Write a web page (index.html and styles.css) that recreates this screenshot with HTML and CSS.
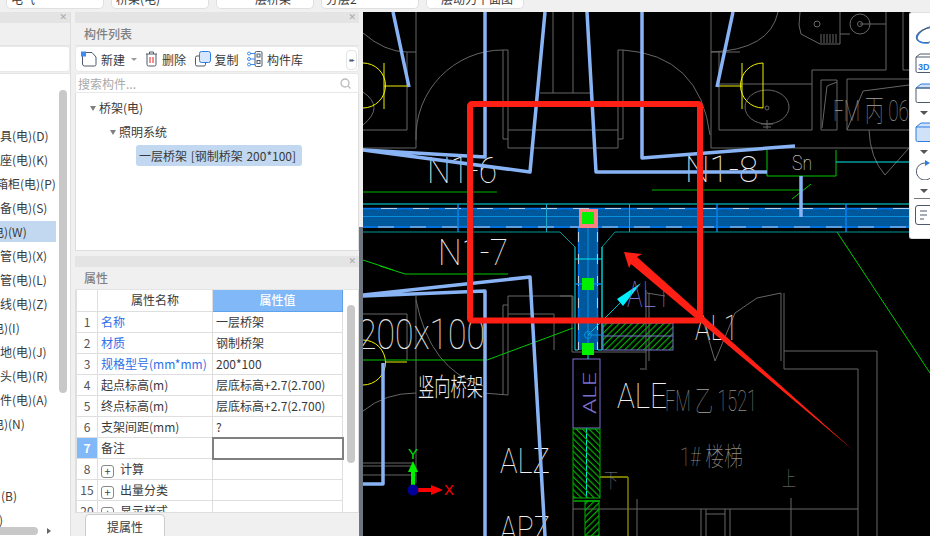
FILE: index.html
```html
<!DOCTYPE html>
<html lang="zh-CN">
<head>
<meta charset="utf-8">
<title>构件列表</title>
<link rel="stylesheet" href="styles.css">
</head>
<body>
<div class="app">
  <header class="topbar">
    <div class="pill pill-a"><span>电气</span></div>
    <div class="pill pill-a"><span>桥架(电)</span></div>
    <div class="pill pill-a pill-center"><span>一层桥架</span></div>
    <div class="pill pill-a"><span>分层2</span></div>
    <div class="pill pill-a pill-center"><span>层动力平面图</span></div>
  </header>
  <main class="main">
    <aside class="left">
      <div class="bar"><span class="close">✕</span></div>
      <div class="title"></div>
      <div class="left-tools"></div>
      <div class="left-list">
        <ul class="items">
          <li>具(电)(D)</li>
          <li>座(电)(K)</li>
          <li class="clip4">箱柜(电)(P)</li>
          <li>备(电)(S)</li>
          <li class="clip8 selected">电)(W)</li>
          <li>管(电)(X)</li>
          <li>管(电)(L)</li>
          <li>线(电)(Z)</li>
          <li class="clip8">电)(I)</li>
          <li>地(电)(J)</li>
          <li>头(电)(R)</li>
          <li>件(电)(A)</li>
          <li class="clip8">电)(N)</li>
          <li></li>
          <li></li>
          <li class="push">(B)</li>
          <li class="clip8b">)</li>
        </ul>
        <div class="vthumb"></div>
        <div class="hthumb"></div>
        <div class="harrow"></div>
      </div>
    </aside>

    <section class="mid">
      <div class="panel list-panel">
        <div class="bar"><span class="close">✕</span></div>
        <div class="title">构件列表</div>
        <div class="tools">
          <span class="tool tool-new">
            <svg class="ico" width="16" height="16" viewBox="0 0 16 16"><path class="ico-dark" d="M1.5 3.5V13a2 2 0 0 0 2 2h10a1.5 1.5 0 0 0 1.500-1.500V6L11 1.500H4"/><rect class="ico-fill" x="0" y="0.500" width="5" height="5"/></svg>
            新建<i class="caret"></i>
          </span>
          <span class="tool">
            <svg class="ico" width="13" height="16" viewBox="0 0 13 16"><path class="ico-dark" d="M1 3h11M4.500 3V1h4v2M2 3v10.500a1.500 1.500 0 0 0 1.500 1.500h6a1.500 1.500 0 0 0 1.500-1.500V3"/><path class="ico-red" d="M5 6v6M8 6v6"/></svg>
            删除
          </span>
          <span class="tool">
            <svg class="ico" width="16" height="16" viewBox="0 0 16 16"><path class="ico-dark" d="M4 5H2a1.500 1.500 0 0 0-1.500 1.500v7A1.500 1.500 0 0 0 2 15h7a1.500 1.500 0 0 0 1.500-1.500V12"/><rect class="ico-blue" x="4.500" y="0.500" width="11" height="11" rx="2"/></svg>
            复制
          </span>
          <span class="tool">
            <svg class="ico" width="16" height="16" viewBox="0 0 16 16"><rect class="ico-dark" x="8" y="0.500" width="7" height="15" rx="1.500"/><rect class="ico-dark" x="10" y="3" width="3" height="3"/><rect class="ico-dark" x="10" y="9.500" width="3" height="3"/><path class="ico-line" d="M3 2.500h5M3 8h5M3 13.500h5"/><circle class="ico-line" cx="2" cy="2.500" r="1.500"/><circle class="ico-line" cx="2" cy="8" r="1.500"/><circle class="ico-line" cx="2" cy="13.500" r="1.500"/></svg>
            构件库
          </span>
          <span class="more">▸▸</span>
        </div>
        <div class="search">
          <span>搜索构件...</span>
          <svg width="11" height="11" viewBox="0 0 11 11"><circle class="ico-search" cx="5" cy="5" r="4"/><path class="ico-search" d="M8 8l2.500 2.500"/></svg>
        </div>
        <div class="tree">
          <div class="node node-1"><i class="tri"></i>桥架(电)</div>
          <div class="node node-2"><i class="tri"></i>照明系统</div>
          <div class="node-3">一层桥架 [钢制桥架 200*100]</div>
        </div>
      </div>

      <div class="panel prop-panel">
        <div class="bar"><span class="close">✕</span></div>
        <div class="title">属性</div>
        <div class="prop-body">
          <table class="props">
            <colgroup><col class="c1"><col class="c2"><col class="c3"></colgroup>
            <tr><th></th><th>属性名称</th><th class="hot">属性值</th></tr>
            <tr><td class="n">1</td><td class="link">名称</td><td>一层桥架</td></tr>
            <tr><td class="n">2</td><td class="link">材质</td><td>钢制桥架</td></tr>
            <tr><td class="n">3</td><td class="link">规格型号(mm*mm)</td><td>200*100</td></tr>
            <tr><td class="n">4</td><td>起点标高(m)</td><td>层底标高+2.7(2.700)</td></tr>
            <tr><td class="n">5</td><td>终点标高(m)</td><td>层底标高+2.7(2.700)</td></tr>
            <tr><td class="n">6</td><td>支架间距(mm)</td><td>?</td></tr>
            <tr><td class="n hot">7</td><td>备注</td><td class="focus"></td></tr>
            <tr><td class="n">8</td><td><i class="plus">+</i>计算</td><td></td></tr>
            <tr><td class="n">15</td><td><i class="plus">+</i>出量分类</td><td></td></tr>
            <tr><td class="n">20</td><td><i class="plus">+</i>显示样式</td><td></td></tr>
          </table>
          <div class="prop-thumb"></div>
        </div>
        <div class="btn-row"><button class="btn">提属性</button></div>
      </div>
    </section>

    <div class="sash"></div>

    <section class="canvas">
      <svg class="cad-svg" width="567" height="524" viewBox="363 12 567 524">
        <defs>
          <pattern id="hatch" width="4.500" height="4.500" patternUnits="userSpaceOnUse" patternTransform="rotate(45)">
            <rect class="h-line" width="1.200" height="4.500"/>
          </pattern>
          <pattern id="hatch2" width="4.500" height="4.500" patternUnits="userSpaceOnUse" patternTransform="rotate(-45)">
            <rect class="h-line" width="1.200" height="4.500"/>
          </pattern>
        </defs>
        <rect class="bg" x="363" y="12" width="567" height="524"/>

        <path class="wall" d="M416 12V148H363M407 52V130H363M407 52H416M363 33Q385 52 407 52M416 140A87 87 0 0 1 503 50H508V148M503 50V139H508M508 130H618M508 148H618M618 148V50H623V139H618M623 50Q700 55 710 135M553 12V93M573 12V93M540 93H590M711 12V148H909M711 52H740M719 52V130H812V70H886V12M719 84H812M903 12V70H909M711 52Q770 50 778 12M847 79H909M847 79V130H909M863 91L909 85M863 91L847 130M821 80H837V130H821ZM827 86L837 82M827 86L822 128M869 130Q870 158 885 175L909 148"/>
        <path class="wall" d="M800 12L799 25 801 34 820 44H840V34H850M860 24H886M840 12V34"/>
        <circle class="wall" cx="817" cy="24" r="3"/>
        <circle class="wall" cx="860" cy="24" r="10"/>
        <circle class="wall" cx="860" cy="24" r="2.500"/>
        <path class="wall" d="M821 34V43M824 34V43M827 34V43M830 34V43M833 34V43M836 34V43"/>
        <ellipse class="wall" cx="767" cy="107" rx="22" ry="17"/>
        <circle class="wall" cx="767" cy="108" r="2"/>
        <path class="wall" d="M761 124H773M767 120V129M763 127H771"/>
        <path class="wall" d="M363 92Q385 107 363 125M363 314H407V360M416 296V483M416 300Q430 370 483 386M363 411Q385 393 416 393M363 463H413M363 466H413M363 475H416M483 393L508 395M508 296H573V320M508 296V395M503 305V395M503 305H508M508 314H554V350M560 296H572V352H646M646 290V368M649 293V361M640 369H647M647 293L665 296M784 293V369M781 293V361M781 293L757 298 735 313 715 361 703 320M784 351H877V536M784 369H858V536M573 509H858M573 498V536M637 499V536M701 509V536M706 509V536M725 509V536M730 509V536M706 514H725M791 498V536"/>

        <path class="yellow" d="M363 63A22 22 0 0 1 363 108M384 63V109M384 86H409M742 63V109M763 63V108M717 86H742M763 63A22 22 0 0 0 763 108M363 340A22 22 0 0 1 363 385M385 362H407M600 477H628"/>
        <path class="olive" d="M628 477V536"/>

        <path class="green" d="M767 150V176H836V150M792 199L811 184M837 232L930 373M363 260L393 270M380 266L405 274H508M363 360H487L573 328"/>
        <path class="dgreen" d="M652 190H800M363 192H497"/>
        <path class="cyan" d="M836 162H909"/>

        <text class="cad t-white" x="427" y="183" textLength="70" lengthAdjust="spacingAndGlyphs">N1-6</text>
        <text class="cad t-white" x="438" y="265" textLength="70" lengthAdjust="spacingAndGlyphs">N1-7</text>
        <text class="cad t-white" x="685" y="182" textLength="73" lengthAdjust="spacingAndGlyphs">N1-8</text>
        <text class="cad t-small" x="792" y="170" textLength="20" lengthAdjust="spacingAndGlyphs">Sn</text>
        <text class="cad t-big" x="358" y="349" textLength="127" lengthAdjust="spacingAndGlyphs">200x100</text>
        <text class="cad-cjk t-white" x="418" y="396" textLength="65" lengthAdjust="spacingAndGlyphs">竖向桥架</text>
        <text class="cad t-alz" x="500" y="473" textLength="50" lengthAdjust="spacingAndGlyphs">ALZ</text>
        <text class="cad t-alz" x="500" y="541" textLength="50" lengthAdjust="spacingAndGlyphs">APZ</text>
        <text class="cad t-alz" x="617" y="408" textLength="50" lengthAdjust="spacingAndGlyphs">ALE</text>
        <text class="cad t-alz" x="695" y="340" textLength="43" lengthAdjust="spacingAndGlyphs">AL1</text>
        <text class="cad t-gray" x="665" y="411" textLength="92" lengthAdjust="spacingAndGlyphs">FM 乙 1521</text>
        <text class="cad t-gray2" x="680" y="466" textLength="63" lengthAdjust="spacingAndGlyphs">1# 楼梯</text>
        <text class="cad t-gray3" x="782" y="486" textLength="14" lengthAdjust="spacingAndGlyphs">上</text>
        <text class="cad t-gray3" x="604" y="488" textLength="14" lengthAdjust="spacingAndGlyphs">下</text>
        <text class="cad t-gray" x="833" y="121" textLength="76" lengthAdjust="spacingAndGlyphs">FM 丙 06</text>

        <path class="cyan" d="M363 204H909"/>
        <rect class="duct" x="363" y="208" width="546" height="20"/>
        <path class="duct-edge" d="M363 208.500H909M363 227H909"/>
        <path class="duct-mid" d="M363 216.500H909"/>
        <path class="duct-dash" d="M381 208.500H909"/>
        <path class="duct-dash" d="M378 227H909"/>
        <path class="tick-blue" d="M458 204V232M717 204V232M846 204V232"/>
        <path class="tick-cyan" d="M546.500 204V232M629.500 204V232"/>
        <path class="teal" d="M363 232H560L575 247M615 232H909M615 232L602 247V350"/>

        <path class="blue-pipe" d="M393 12L409 87M485 12V157L363 150 530 172 545 12M587 12L596 172H767M642 12V158L795 146M733 12L717 87M801 176V217M363 295L530 277 545 536M363 296L485 291V536M383 363V484H363"/>

        <rect class="duct" x="578" y="228" width="20" height="122"/>
        <path class="duct-edge" d="M578.500 228V350M597.500 228V350"/>
        <path class="duct-mid" d="M588 228V350"/>
        <path class="duct-dash2" d="M578.500 232V350M597.500 232V350"/>
        <path class="cyan" d="M575 247V350H578M602 247V350H598M575 259H602"/>
        <path class="tick-blue" d="M575 284H602"/>

        <rect class="hatch-box" x="603" y="323" width="70" height="27"/>
        <path class="purple" d="M603 336H673"/>
        <path class="lblue" d="M588 335H603"/>

        <rect class="ale-box" x="573" y="359" width="27" height="69"/>
        <text class="ale-text" x="0" y="0" transform="translate(596 414) rotate(-90)" textLength="42" lengthAdjust="spacingAndGlyphs">ALE</text>
        <path class="cyan" d="M586.500 428V498M588 350V359"/>
        <rect class="hatch-green" x="573" y="429" width="27" height="69"/>
        <path class="green-bold" d="M573 501H600"/>
        <rect class="hatch-green2" x="585" y="501" width="14" height="35"/>

        <rect class="pink" x="579" y="209" width="19" height="19"/>
        <rect class="handle" x="582" y="212" width="12" height="12"/>
        <rect class="handle" x="582" y="278" width="12" height="12"/>
        <path class="red-thin" d="M582 350H594"/>
        <rect class="handle" x="582" y="343" width="12" height="12"/>

        <path class="cyan-thin" d="M620 303L588 335"/>
        <polygon class="cyan-fill" points="641,283 617,299 623,306"/>
        <circle class="lblue" cx="588" cy="335" r="3.500"/>
        <text class="cad t-purple" x="627" y="307" textLength="43" lengthAdjust="spacingAndGlyphs">AL1</text>

        <rect class="red-box" x="470" y="104" width="230" height="216.500" rx="2"/>
        <polygon class="red-fill" points="624,252 642,254 637,257 853,450 631,264 629,268"/>

        <path class="axis-y" d="M413 490V472"/>
        <polygon class="axis-y-head" points="413,461 408,472 418,472"/>
        <path class="axis-x" d="M413 490H431"/>
        <polygon class="axis-x-head" points="443,490 431,485 431,495"/>
        <circle class="axis-o" cx="413" cy="490" r="5.500"/>
        <text class="axis-lab axis-lab-y" x="408" y="459">Y</text>
        <text class="axis-lab axis-lab-x" x="444" y="495">X</text>
      </svg>

      <div class="vtools">
        <svg width="30" height="20" viewBox="0 0 30 20"><path class="t-blue" d="M2 13C3 7 12 1 22 1"/><ellipse class="t-grey" cx="14" cy="10" rx="13" ry="7" transform="rotate(-15 14 10)"/><path class="t-blue" d="M2 10C1 16 6 19 14 18"/></svg>
        <svg class="v-3d" width="30" height="20" viewBox="0 0 30 20"><path class="t-grey" d="M1 4L5 1H30M1 4V18a1.500 1.500 0 0 0 1.500 1.500H30M1 4H30"/><text class="t-3d" x="3" y="17">3D</text></svg>
        <svg class="v-cube" width="30" height="20" viewBox="0 0 30 20"><path class="t-sky" d="M1 5L6 1H30V5H1Z"/><path class="t-grey" d="M1 5V18a1.500 1.500 0 0 0 1.500 1.500H30M1 5H30"/></svg>
        <i class="vcaret"></i>
        <svg class="v-fill" width="30" height="20" viewBox="0 0 30 20"><path class="t-fill" d="M1 5L6 1H30V19.500H2.500A1.500 1.500 0 0 1 1 18Z"/><path class="t-blue" d="M1 5H30"/></svg>
        <i class="vcaret"></i>
        <svg class="v-rot" width="30" height="20" viewBox="0 0 30 20"><path class="t-grey" d="M10 3A8.500 8.500 0 1 0 18 14"/><polygon class="t-tri" points="10,0 15,3 10,6"/></svg>
        <i class="vcaret vcaret-low"></i>
        <div class="vsep"></div>
        <svg class="v-list" width="30" height="20" viewBox="0 0 30 20"><path class="t-grey" d="M30 .5H3A2.500 2.500 0 0 0 .5 3V17A2.500 2.500 0 0 0 3 19.500H20M5 6H12M15 6H22M5 10H12M15 10H18M5 14H9"/><circle class="t-blue" cx="19" cy="15" r="3"/></svg>
      </div>
    </section>
  </main>
</div>
</body>
</html>
```

FILE: styles.css
```css
* { box-sizing: border-box; }
html, body { margin: 0; padding: 0; }
body {
  width: 930px;
  height: 536px;
  overflow: hidden;
  background: #f0f0f0;
  font-family: "Noto Sans CJK SC", "Liberation Sans", sans-serif;
  font-size: 12px;
  color: #3a3a3a;
}
.app { display: flex; flex-direction: column; height: 536px; }

/* top strip */
.topbar { display: flex; gap: 7px; height: 12px; padding-left: 6px; flex: none; }
.pill {
  width: 98px;
  height: 9px;
  background: #fff;
  border: 1px solid #e0e0e0;
  border-top: 0;
  border-radius: 0 0 5px 5px;
  overflow: hidden;
  line-height: 12px;
  padding-left: 4px;
}
.pill span { display: block; margin-top: -7px; }
.pill-center { text-align: center; }

.main { display: flex; height: 524px; flex: none; }

/* shared panel parts */
.bar {
  height: 11px;
  background: #e4e4e4;
  display: flex;
  justify-content: flex-end;
  align-items: center;
  padding-right: 3px;
  flex: none;
}
.close { color: #a8a8a8; font-size: 9px; line-height: 11px; font-family: "DejaVu Sans", sans-serif; }
.title {
  height: 23px;
  line-height: 22px;
  background: #f0f0f0;
  color: #808080;
  font-weight: 500;
  padding-left: 9px;
  border-bottom: 1px solid #e4e4e4;
  flex: none;
}

/* left column */
.left { width: 71px; flex: none; display: flex; flex-direction: column; border-right: 1px solid #dedede; }
.left-tools {
  height: 26px;
  background: #fff;
  border: 1px solid #e8e8e8;
  border-left: 0;
  border-radius: 0 4px 4px 0;
  flex: none;
}
.left-list {
  position: relative;
  flex: 1;
  margin-top: 1px;
  background: #fff;
  overflow: hidden;
  border-top: 1px solid #e4e4e4;
}
.items { list-style: none; margin: 0; padding: 51px 0 0; width: 56px; }
.items li {
  height: 21px;
  line-height: 21px;
  margin-bottom: 3px;
  white-space: nowrap;
}
.items .clip4 { text-indent: -4px; }
.items .clip8 { text-indent: -8px; }
.items .clip8b { text-indent: -1px; }
.items .push { text-indent: 1px; }
.items .selected { background: #c1d8f0; }
.vthumb { position: absolute; left: 59px; top: 16px; width: 8px; height: 303px; background: #c8c8c8; border-radius: 4px; }
.hthumb { position: absolute; left: 0; top: 453px; width: 38px; height: 8px; background: #c8c8c8; border-radius: 0 4px 4px 0; }
.harrow {
  position: absolute;
  left: 47px;
  top: 454px;
  border-left: 4px solid #666;
  border-top: 3.500px solid transparent;
  border-bottom: 3.500px solid transparent;
}

/* middle column */
.mid { width: 284px; margin-left: 4px; flex: none; display: flex; flex-direction: column; gap: 5px; height: 524px; }
.list-panel { height: 239px; flex: none; display: flex; flex-direction: column; }
.tools {
  height: 26px;
  background: #fff;
  border: 1px solid #e8e8e8;
  border-radius: 4px;
  display: flex;
  align-items: center;
  padding-left: 5px;
  position: relative;
  flex: none;
}
.tool { display: flex; align-items: center; gap: 4px; margin-right: 8.500px; white-space: nowrap; color: #3a3a3a; }
.tool-new { margin-right: 8px; }
.ico { flex: none; fill: none; }
.ico-dark { fill: none; stroke: #4d5a6b; stroke-width: 1; }
.ico-fill { fill: #3d8df0; }
.ico-red { fill: none; stroke: #e02020; stroke-width: 1; }
.ico-blue { fill: #d6e6fb; stroke: #2f7de0; stroke-width: 1; }
.ico-line { fill: none; stroke: #3d8df0; stroke-width: 1; }
.ico-search { fill: none; stroke: #bbb; stroke-width: 1.300; }
.caret {
  display: inline-block;
  margin-left: 2px;
  border-top: 3px solid #999;
  border-left: 3px solid transparent;
  border-right: 3px solid transparent;
}
.more {
  position: absolute;
  right: 1px;
  top: 3px;
  width: 11px;
  height: 20px;
  border: 1px solid #e4e4e4;
  border-radius: 4px;
  font-size: 6px;
  line-height: 18px;
  letter-spacing: -1px;
  text-align: center;
  font-family: "DejaVu Sans", sans-serif;
  color: #555;
}
.search {
  height: 20px;
  margin-top: 1px;
  background: #fff;
  border: 1px solid #e8e8e8;
  border-radius: 3px 3px 0 0;
  display: flex;
  align-items: center;
  justify-content: space-between;
  padding: 0 7px 0 2px;
  color: #aaa;
  font-size: 12px;
  flex: none;
}
.tree {
  flex: 1;
  background: #fff;
  border: 1px solid #dedede;
  border-top: 0;
  padding-top: 3px;
}
.node { height: 24px; line-height: 24px; display: flex; align-items: center; }
.node-1 { padding-left: 14px; }
.node-2 { padding-left: 34px; }
.tri {
  display: inline-block;
  margin-right: 3px;
  border-top: 5px solid #808080;
  border-left: 3px solid transparent;
  border-right: 3px solid transparent;
}
.node-3 {
  margin: 1px 0 0 60px;
  width: 166px;
  height: 21px;
  line-height: 21px;
  padding-left: 3px;
  background: #c1d8f0;
  border-radius: 3px;
  white-space: nowrap;
  word-spacing: 1px;
}

/* properties */
.prop-panel { flex: 1; min-height: 0; overflow: hidden; display: flex; flex-direction: column; }
.prop-body {
  position: relative;
  height: 223px;
  background: #fff;
  border: 1px solid #dedede;
  border-top: 0;
  overflow: hidden;
  flex: none;
}
.props { border-collapse: collapse; table-layout: fixed; width: 266px; margin-left: 0; }
.c1 { width: 21px; }
.c2 { width: 115px; }
.c3 { width: 130px; }
.props th, .props td {
  height: 21px;
  padding: 0 0 0 3px;
  border: 1px solid #dedede;
  font-weight: 400;
  line-height: 20px;
  white-space: nowrap;
  overflow: hidden;
  color: #3a3a3a;
}
.props th { text-align: center; padding: 0; border-top: 0; }
.props th.hot { background: #80b8f8; color: #fff; font-weight: 500; border-color: #5ea2ee; }
.props td.n { text-align: center; padding: 0; color: #555; }
.props td.n.hot { background: #80b8f8; color: #fff; font-weight: 700; }
.props td.link { color: #2f6fe8; }
.props td.focus { border: 2px solid #808080; }
.plus {
  display: inline-block;
  width: 13px;
  height: 13px;
  margin-right: 6px;
  border: 1px solid #888;
  border-radius: 3px;
  font-style: normal;
  font-size: 11px;
  line-height: 10px;
  text-align: center;
  color: #444;
  vertical-align: -2px;
}
.prop-thumb { position: absolute; left: 271px; top: 15px; width: 8px; height: 158px; background: #c8c8c8; border-radius: 4px; }
.btn-row { padding: 1px 0 0 10px; flex: none; }
.btn {
  display: block;
  width: 80px;
  height: 24px;
  padding: 0;
  background: #fff;
  border: 1px solid #ccc;
  border-radius: 4px 4px 0 0;
  font-family: inherit;
  font-size: 12px;
  color: #3a3a3a;
}

/* sash */
.sash { width: 4px; flex: none; margin-top: 215px; background: #6d7680; }

/* canvas */
.canvas { position: relative; width: 567px; flex: none; background: #000; overflow: hidden; }
.cad-svg { display: block; }
.bg { fill: #000; }
.wall { fill: none; stroke: #666; stroke-width: 1; }
.yellow { fill: none; stroke: #f0f000; stroke-width: 1; }
.olive { fill: none; stroke: #808000; stroke-width: 1.500; }
.green { fill: none; stroke: #00c800; stroke-width: 1; }
.dgreen { fill: none; stroke: #007800; stroke-width: 1.500; }
.green-bold { fill: none; stroke: #008000; stroke-width: 2; }
.cyan { fill: none; stroke: #00e8f0; stroke-width: 1; }
.cyan-thin { fill: none; stroke: #00b8c8; stroke-width: 1; }
.cyan-fill { fill: #00f0ff; }
.teal { fill: none; stroke: #009898; stroke-width: 1; }
.purple { fill: none; stroke: #7a70d0; stroke-width: 1; }
.lblue { fill: none; stroke: #0a8fe0; stroke-width: 1; }
.duct { fill: #00589c; }
.duct-edge { fill: none; stroke: #0078f0; stroke-width: 1.500; }
.duct-mid { fill: none; stroke: #0a8fe0; stroke-width: 1; }
.duct-dash { fill: none; stroke: #b8cfe8; stroke-width: 1; stroke-dasharray: 16 16; }
.duct-dash2 { fill: none; stroke: #b8cfe8; stroke-width: 1; stroke-dasharray: 10 12; }
.tick-blue { fill: none; stroke: #0a80f0; stroke-width: 1.500; }
.tick-cyan { fill: none; stroke: #20a8c8; stroke-width: 1; }
.blue-pipe { fill: none; stroke: #88b4f5; stroke-width: 3.500; stroke-linejoin: round; }
.h-line { fill: #00b000; }
.hatch-box { fill: url(#hatch); stroke: #7a70d0; stroke-width: 1; }
.hatch-green { fill: url(#hatch2); stroke: #00b000; stroke-width: 1; }
.hatch-green2 { fill: url(#hatch); stroke: #00b000; stroke-width: 1; }
.ale-box { fill: #000; stroke: #7a70d0; stroke-width: 1; }
.ale-text { fill: #7a70d0; font-family: "Roboto", sans-serif; font-weight: 300; font-size: 18px; }
.pink { fill: #ff8080; }
.handle { fill: #00f000; }
.red-thin { fill: none; stroke: #f00; stroke-width: 1.500; }
.red-box { fill: none; stroke: #ff1f14; stroke-width: 6; }
.red-fill { fill: #ff1f14; }
.cad { font-family: "Roboto", "Noto Sans CJK SC", sans-serif; font-weight: 100; }
.cad-cjk { font-family: "Noto Sans CJK SC", sans-serif; font-weight: 300; }
.t-white { fill: #f0f0f0; font-size: 37px; }
.cad-cjk.t-white { font-size: 25px; }
.t-small { fill: #e4e4e4; font-size: 21px; }
.t-big { fill: #e0e0e0; font-size: 42px; }
.t-alz { fill: #f0f0f0; font-size: 35px; }
.t-gray { fill: #8a8a8a; font-size: 30px; }
.t-gray2 { fill: #8a8a8a; font-size: 26px; }
.t-gray3 { fill: #8a8a8a; font-size: 20px; }
.t-purple { fill: #7a70d0; font-size: 36px; }
.axis-y { fill: none; stroke: #00f000; stroke-width: 4; }
.axis-y-head { fill: #00f000; }
.axis-x { fill: none; stroke: #f00; stroke-width: 4; }
.axis-x-head { fill: #f00; }
.axis-o { fill: #000098; }
.axis-lab { font-family: "Liberation Sans", sans-serif; font-size: 15px; }
.axis-lab-y { fill: #00e000; }
.axis-lab-x { fill: #f00; }

/* floating right toolbar */
.vtools {
  position: absolute;
  right: 0;
  top: 0;
  width: 21px;
  height: 227px;
  padding: 12px 0 0 5px;
  background: #fff;
  border-radius: 3px 0 0 3px;
  border: 1px solid #e0e0e0;
  border-right: 0;
  display: flex;
  flex-direction: column;
  align-items: flex-start;
  overflow: hidden;
}
.vtools svg { flex: none; }
.v-3d { margin-top: 8px; }
.v-cube { margin-top: 10px; }
.v-fill { margin-top: 7px; }
.v-rot { margin-top: 6px; }
.v-list { margin-top: 6px; }
.vcaret {
  flex: none;
  margin: 8px 0 0 5px;
  border-top: 4px solid #555;
  border-left: 4px solid transparent;
  border-right: 4px solid transparent;
}
.vcaret-low { margin-top: 9px; }
.vsep { flex: none; width: 16px; height: 1px; margin: 5px 0 0 -1px; background: #777; }
.t-blue { fill: none; stroke: #2f7de0; stroke-width: 1.200; }
.t-grey { fill: none; stroke: #4d5a6b; stroke-width: 1; }
.t-sky { fill: #cfe0f7; stroke: #2f7de0; stroke-width: 1; }
.t-fill { fill: #d0e2f8; stroke: #2f7de0; stroke-width: 1; }
.t-tri { fill: #2f7de0; }
.t-3d { fill: #2f7de0; font-family: "Liberation Sans", sans-serif; font-weight: 700; font-size: 9px; }
```
